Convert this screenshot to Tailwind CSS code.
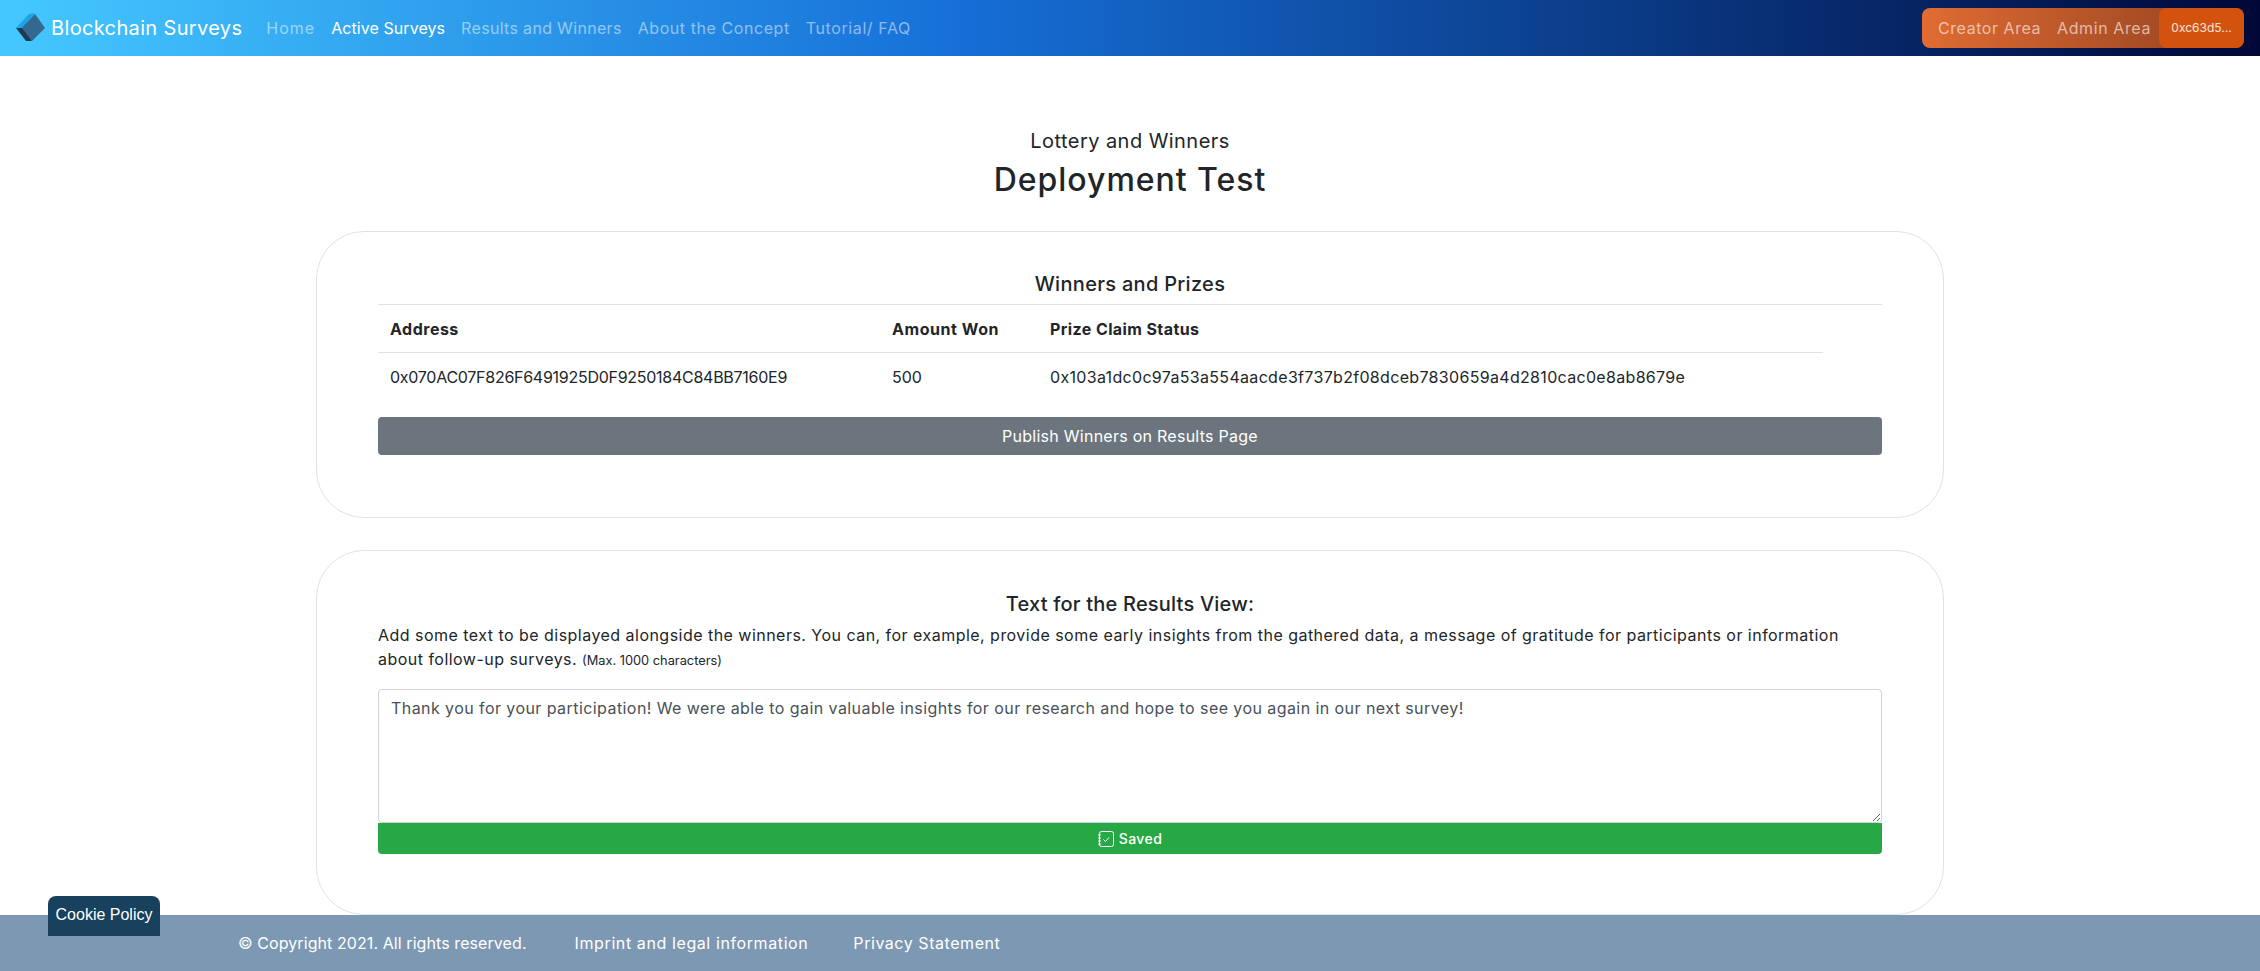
<!DOCTYPE html>
<html lang="en">
<head>
<meta charset="utf-8">
<title>Lottery and Winners</title>
<script src="https://cdn.jsdelivr.net/npm/@tailwindcss/browser@4"></script>
</head>
<body class="font-['Inter','Open_Sans',sans-serif] text-[#212529] bg-white">
<div class="relative h-[971px] w-[2260px] overflow-hidden flex flex-col">
  <header class="h-14 shrink-0 flex items-center justify-between pl-4 pr-[16px] bg-[linear-gradient(90deg,#45c8ff_0%,#1670d8_42%,#000838_100%)]">
    <div class="flex items-center">
      <svg class="w-[30px] h-[30px] mr-[5px]" viewBox="0 0 30 30"><polygon points="19,1 29,15 16,28 5,15" fill="#35688f"/><polygon points="0,15 13,1 19,0 6,15" fill="#1aa5e8"/><polygon points="0,15 6,15 16,28 10,28" fill="#1d3a52"/></svg>
      <span class="text-[20px] text-white tracking-[0.35px]">Blockchain Surveys</span>
      <nav class="flex gap-4 ml-6 text-[16px] text-white/50">
        <a class="tracking-[1px]">Home</a><a class="text-white tracking-[0.07px]">Active Surveys</a><a class="tracking-[0.32px]">Results and Winners</a><a class="tracking-[0.57px]">About the Concept</a><a class="tracking-[0.6px]">Tutorial/ FAQ</a>
      </nav>
    </div>
    <div class="flex items-center h-10 rounded-lg bg-gradient-to-r from-[#e06c32] to-[#924020] text-[16px] text-white/60">
      <a class="pl-4 tracking-[0.55px]">Creator Area</a>
      <a class="pl-4 pr-2 tracking-[0.6px]">Admin Area</a>
      <span class="w-[85px] h-10 flex items-center justify-center rounded-lg bg-[#d2520e] text-[12px] text-white/85">0xc63d5...</span>
    </div>
  </header>
  <main class="flex-1 min-h-0 flex flex-col items-center">
    <h2 class="mt-[72px] text-[20px] leading-[26px] tracking-[0.45px]">Lottery and Winners</h2>
    <h1 class="mt-[6px] text-[32px] leading-[40px] font-medium tracking-[0.96px]">Deployment Test</h1>
    <section class="mt-[31px] w-[1628px] h-[287px] border border-[#dee2e6] rounded-[48px] px-[61px] pt-[40px]">
      <h3 class="text-center text-[20px] leading-[24px] font-medium pb-[8px] tracking-[0.3px]">Winners and Prizes</h3>
      <div class="border-t border-[#dee2e6] w-full">
        <div class="w-[1445px] grid grid-cols-[502px_158px_785px]">
          <div class="pl-3 h-12 flex items-center font-bold border-b border-[#dee2e6] tracking-[0.5px]">Address</div>
          <div class="pl-3 h-12 flex items-center font-bold border-b border-[#dee2e6] tracking-[0.55px]">Amount Won</div>
          <div class="pl-3 h-12 flex items-center font-bold border-b border-[#dee2e6] tracking-[0.4px]">Prize Claim Status</div>
          <div class="pl-3 h-[48px] flex items-center tracking-[-0.27px]">0x070AC07F826F6491925D0F9250184C84BB7160E9</div>
          <div class="pl-3 h-[48px] flex items-center">500</div>
          <div class="pl-3 h-[48px] flex items-center tracking-[0.32px]">0x103a1dc0c97a53a554aacde3f737b2f08dceb7830659a4d2810cac0e8ab8679e</div>
        </div>
      </div>
      <div class="mt-[16px] h-[38px] bg-[#6c757d] rounded text-white flex items-center justify-center tracking-[0.26px]">Publish Winners on Results Page</div>
    </section>
    <section class="mt-[32px] w-[1628px] flex-1 border border-[#dee2e6] rounded-[48px] px-[61px] pt-[41px]">
      <h3 class="text-center text-[20px] leading-[24px] font-medium tracking-[0.2px]">Text for the Results View:</h3>
      <p class="mt-[7px] text-[16px] leading-[24px] tracking-[0.47px]">Add some text to be displayed alongside the winners. You can, for example, provide some early insights from the gathered data, a message of gratitude for participants or information about follow-up surveys. <small class="text-[12.8px] tracking-normal">(Max. 1000 characters)</small></p>
      <textarea class="mt-[16px] block w-full h-[134px] border border-[#ced4da] rounded px-3 py-[6px] text-[#495057] text-[16px] leading-[24px] tracking-[0.43px]">Thank you for your participation! We were able to gain valuable insights for our research and hope to see you again in our next survey!</textarea>
      <div class="h-[31px] bg-[#28a745] rounded-b text-white text-[14px] font-medium flex items-center justify-center gap-[5px]">
        <svg class="w-4 h-4" viewBox="0 0 16 16" fill="none" stroke="white" stroke-width="1"><rect x="1.5" y=".5" width="14" height="15" rx="2"/><path d="M5.5 8.5l2 2 3.5-4"/><path d="M0 4h3M0 7h3M0 10h3M0 13h3"/></svg>
        <span class="tracking-[0.4px]">Saved</span>
      </div>
    </section>
  </main>
  <footer class="h-14 shrink-0 bg-[#7d98b3] text-white text-[16px] flex items-center pl-[238px]">
    <span class="tracking-[0.08px]">© Copyright 2021. All rights reserved.</span>
    <a class="ml-[48px] tracking-[0.6px]">Imprint and legal information</a>
    <a class="ml-[45px] tracking-[0.55px]">Privacy Statement</a>
  </footer>
  <button class="absolute left-[48px] top-[896px] w-[112px] h-10 bg-[#17415c] text-white text-[16px] rounded-t-lg pb-[2px] font-['Liberation_Sans',sans-serif]">Cookie Policy</button>
</div>
</body>
</html>
